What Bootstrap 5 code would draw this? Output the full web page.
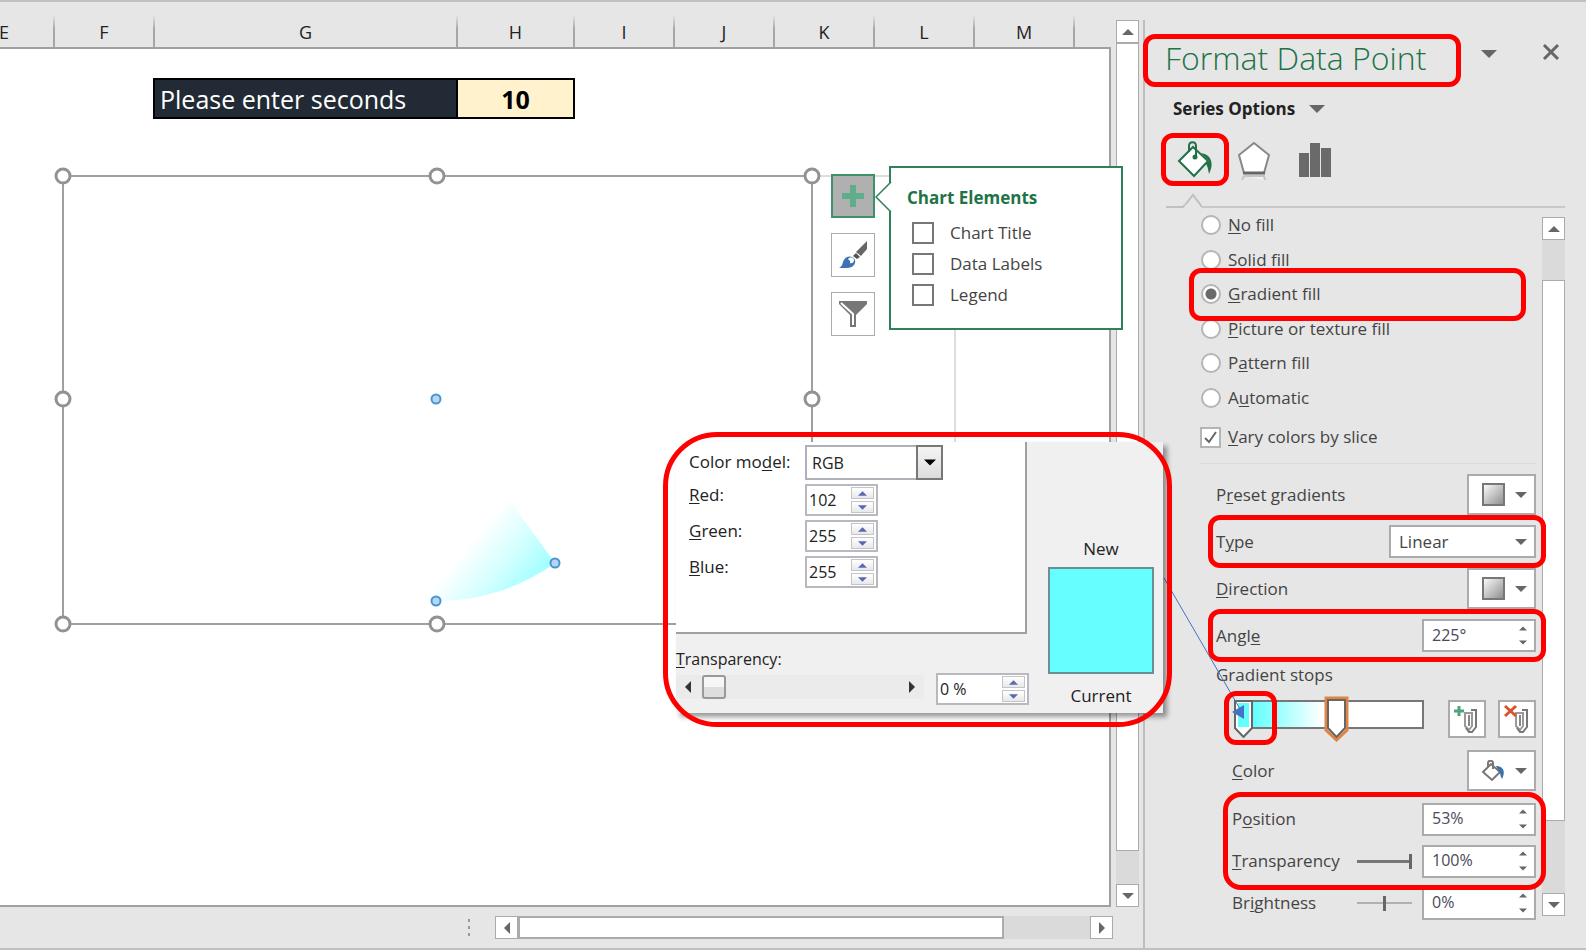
<!DOCTYPE html>
<html lang="en">
<head>
<meta charset="utf-8">
<meta name="viewport" content="width=device-width, initial-scale=1">
<title>Format Data Point</title>
<link href="https://cdn.jsdelivr.net/npm/bootstrap@5.3.0/dist/css/bootstrap.min.css" rel="stylesheet">
<style>
  :root { --chrome:#e6e6e6; --edge:#ababab; --ink:#444; --green:#217346; --callout:#fe0000; }
  body { font-family:"Open Sans","Noto Sans",sans-serif; font-size:17px; line-height:24px; color:var(--ink); background:var(--chrome); }
  button, input, select { font:inherit; color:inherit; border-radius:0; }
  button { padding:0; background:#fff; border:1px solid var(--edge); display:flex; align-items:center; justify-content:center; }
  .app { border-top:2px solid #c0c0c0; border-bottom:2px solid #c0c0c0; overflow:hidden; }
  u { text-underline-offset:2px; }

  /* worksheet */
  .workbook { min-width:0; }
  .col-heads { height:45px; margin-left:-45px; overflow:hidden; font-size:18px; color:#222; }
  .col-head { flex:0 0 100px; display:flex; align-items:end; justify-content:center; padding-bottom:3px; border-right:2px solid; border-image:linear-gradient(#e6e6e6 30%, #a6a6a6 60%) 1; }
  .col-g { flex-basis:303px; } .col-h { flex-basis:117px; }
  .canvas { background:#fff; border:2px solid #a0a0a0; border-left:0; overflow:hidden; }
  .entry { margin:29px 0 0 153px; height:41px; }
  .entry-label { width:305px; padding-left:5px; background:#222b35; color:#fff; border:2px solid #000; font-size:25px; line-height:38px; }
  .entry-value { width:117px; background:#fff2cc; color:#000; border:2px solid #000; border-left:0; text-align:center; font-weight:700; font-size:25px; }
  .chart-object { left:54px; top:164px; }
  .chart-object > svg { overflow:visible; }
  .side-tools { margin:8px 0 0 11px; gap:15px; }
  .side-tools button { width:44px; height:44px; }
  .side-tools .active-tool { background:#b0b0b0; border:2px solid #3d9268; }
  .elements-menu { width:234px; height:164px; margin-left:14px; padding:18px 0 0 16px; border:2px solid #2e8159; background:#fff; }
  .elements-menu h2 { font-size:17px; line-height:24px; font-weight:700; color:var(--green); margin:0 0 7px; }
  .elements-menu label { height:31px; gap:16px; margin-left:5px; }
  .elements-menu input { appearance:none; width:22px; height:22px; margin:0; border:2px solid #777; background:#fff; }
  .elements-menu .tip { left:-16px; top:14px; }

  /* scroll bars */
  .v-scroll { width:23px; }
  .v-scroll button { height:23px; color:#666; }
  .v-thumb { background:#fff; border:1px solid var(--edge); }
  .v-track, .h-track { background:#dadada; }
  .sheet-scroll { margin:18px 4px 0 5px; }
  .foot { height:41px; padding:9px 30px 9px 467px; }
  .foot button { width:23px; }
  .h-thumb { background:#fff; border:2px solid var(--edge); flex:487 1 0; }
  .h-track { flex:87 1 0; }

  /* format pane */
  .pane { flex:0 0 443px; margin-top:18px; border-left:2px solid #bdbdbd; padding-right:21px; }
  .ring { position:relative; }
  .ring::after { content:""; position:absolute; inset:-3px -10px -3px -8px; border:5px solid var(--callout); border-radius:12px; pointer-events:none; z-index:3; }
  .pane-title { margin-top:14px; height:53px; }
  .pane-title h1 { width:318px; margin:0 0 0 -2px; padding-left:22px; font-size:32px; line-height:48px; font-weight:300; color:var(--green); }
  .pane-title .ring::after, .tabs .ring::after { inset:0; }
  .pane-title button, .series-btn, .tabs button { background:none; border:0; }
  .series-btn { height:44px; margin-left:28px; gap:14px; font-weight:700; color:#222; }
  .tabs { margin:2px 0 0 16px; height:53px; }
  .tabs button { height:53px; }
  .tab-line { padding-left:21px; }
  .form-area { padding-left:55px; padding-right:6px; }
  .opts { height:207px; width:328px; }
  .opt { flex:1; gap:7px; }
  .opt input { appearance:none; width:20px; height:20px; margin:0 0 0 1px; border:2px solid #b5b5b5; border-radius:50%; background:#fff; }
  .opt input:checked { background:radial-gradient(#6a6a6a 0 5px, #fff 6px); }
  .opt.ring::after { inset:-9px 2px -9px -11px; }
  .vary { height:44px; gap:7px; }
  .vary input { appearance:none; width:21px; height:21px; margin:0; border:2px solid #b5b5b5; background:#fff url("data:image/svg+xml,%3Csvg xmlns='http://www.w3.org/2000/svg' viewBox='0 0 17 17'%3E%3Cpath d='M3 9l4 4 7-10' fill='none' stroke='%23666' stroke-width='2'/%3E%3C/svg%3E") center/17px no-repeat; }
  .rule { height:1px; margin:4px 0 7px; background:#dadada; }
  .field { height:47px; margin-left:16px; }
  .field-sm { height:42px; }
  .field-color { height:55px; }
  .pick { width:69px; height:41px; gap:10px; padding-left:5px; border-width:2px; }
  .type-select { appearance:none; width:147px; height:33px; padding:0 8px; border:2px solid var(--edge); background:#fff url("data:image/svg+xml,%3Csvg xmlns='http://www.w3.org/2000/svg' viewBox='0 0 12 6'%3E%3Cpath d='M0 0h12L6 6z' fill='%23666'/%3E%3C/svg%3E") right 7px center/12px 6px no-repeat; }
  .spin { width:114px; height:33px; border:2px solid var(--edge); background:#fff; }
  .spin input { min-width:0; width:100%; border:0; padding:0 0 2px 8px; background:none; font-size:16px; color:#4a4a58; }
  .spin div { width:24px; padding-right:3px; }
  .spin button { border:0; flex:1; background:none; color:#666; }
  .stop-row { height:52px; padding:9px 0 0 34px; }
  .stop-track { width:190px; height:29px; border:2px solid #777; background:linear-gradient(90deg,#66ffff 10%,#fff 46%); }
  .stop-first { left:-2px; top:-2px; }
  .stop-first.ring { position:absolute; }
  .stop-first.ring::after { inset:-9px -24px -7px -10px; }
  .stop-second { left:87px; top:-7px; }
  .stop-row button { width:38px; height:38px; border-width:2px; }
  .slide { appearance:none; width:55px; height:20px; margin:0 10px 0 0; background:linear-gradient(#777,#777) center/100% 3px no-repeat; }
  .slide::-webkit-slider-thumb { appearance:none; width:3px; height:15px; background:#666; }
  .slide.thin { background:linear-gradient(#b0b0b0,#b0b0b0) center/100% 2px no-repeat; }
  .pair.ring::after { inset:-6px -10px -8px -9px; border-radius:18px; }
  .stops-sub .field { margin-left:0; }
  .pane-scroll { margin:9px 0 8px; }
  .link-line { left:17px; top:556px; z-index:2; pointer-events:none; }

  /* colour dialog */
  .color-dialog { right:-20px; top:440px; width:487px; z-index:4; background:#f0f0f0; box-shadow:4px 4px 5px rgba(0,0,0,.4); display:grid; grid-template-columns:351px 1fr; font-size:16px; color:#222; }
  .color-dialog.ring { position:absolute; }
  .color-dialog.ring::after { inset:-10px -9px -14px -13px; border-radius:54px; }
  .rgb-panel { height:192px; padding:3px 0 0 13px; background:#fff; border-right:2px solid #a0a0a0; border-bottom:2px solid #a0a0a0; }
  .rgb-panel .line { height:36px; display:grid; grid-template-columns:116px auto; justify-content:start; }
  .rgb-panel .model { height:39px; }
  .rgb-panel label { font-size:17px; line-height:22px; }
  .model label { padding-top:6px; }
  .model select { appearance:none; width:138px; height:35px; padding:0 5px; border:2px solid #b0b0b8; background:#fff; }
  .drop-face { right:0; top:0; width:27px; height:35px; border:2px solid #777; background:linear-gradient(#f4f4f4,#dcdcdc); pointer-events:none; display:flex; align-items:center; justify-content:center; }
  .dlg-spin { width:73px; height:32px; border:2px solid #b8b8c0; background:#fff; color:#222; }
  .dlg-spin input { width:100%; min-width:0; border:0; padding:0 0 0 2px; background:none; }
  .dlg-spin div { flex:0 0 25px; gap:2px; padding:1px 2px 1px 0; }
  .dlg-spin button { flex:1; border:1px solid #c4c4c8; background:linear-gradient(#fff,#e8e8ea); }
  .alpha { height:79px; padding-top:13px; }
  .alpha-line { height:32px; margin-top:2px; }
  .alpha-line > .bar { width:248px; height:24px; background:#ebebeb; }
  .bar button { width:24px; background:none; border:0; }
  .bar input { appearance:none; flex:1; min-width:0; height:24px; margin:0 0 0 2px; background:none; }
  .bar input::-webkit-slider-thumb { appearance:none; width:24px; height:24px; border:2px solid #999; border-radius:3px; background:linear-gradient(#f6f6f6 50%,#dedede 50%); }
  .alpha .dlg-spin { width:93px; margin-right:-2px; }
  .preview { grid-column:2; grid-row:1 / span 2; padding:0 0 5px 12px; font-size:17px; }
  .swatch { width:106px; height:107px; margin:6px 0 10px; background:#66ffff; border:2px solid #6b8f92; }
</style>
</head>
<body>
<svg width="0" height="0" class="position-absolute" aria-hidden="true">
  <defs>
    <symbol id="down" viewBox="0 0 12 6"><path d="M0 0h12L6 6z" fill="currentColor"/></symbol>
    <symbol id="up" viewBox="0 0 12 6"><path d="M0 6h12L6 0z" fill="currentColor"/></symbol>
    <linearGradient id="metal" x1="0" y1="0" x2="1" y2="1"><stop stop-color="#fff"/><stop offset="1" stop-color="#8a8a8a"/></linearGradient>
    <linearGradient id="slice" gradientUnits="userSpaceOnUse" x1="501" y1="397" x2="441" y2="347"><stop stop-color="#66ffff" stop-opacity=".64"/><stop offset=".5" stop-color="#66ffff" stop-opacity=".28"/><stop offset="1" stop-color="#66ffff" stop-opacity="0"/></linearGradient>
  </defs>
</svg>

<div class="app d-flex min-vh-100">
  <main class="workbook flex-grow-1 position-relative d-flex flex-column">
    <div class="d-flex flex-grow-1">
      <div class="flex-grow-1 d-flex flex-column overflow-hidden">
        <div class="col-heads d-flex">
          <div class="col-head">E</div><div class="col-head">F</div><div class="col-head col-g">G</div><div class="col-head col-h">H</div><div class="col-head">I</div><div class="col-head">J</div><div class="col-head">K</div><div class="col-head">L</div><div class="col-head">M</div>
        </div>
        <div class="canvas flex-grow-1 position-relative">
          <div class="entry d-flex">
            <label class="entry-label" for="seconds">Please enter seconds</label>
            <input class="entry-value" id="seconds" value="10">
          </div>
        </div>
      </div>
      <div class="v-scroll sheet-scroll d-flex flex-column">
        <button aria-label="Scroll up"><svg width="12" height="6"><use href="#up"/></svg></button>
        <div class="v-thumb flex-grow-1"></div>
        <div class="v-track" style="height:33px"></div>
        <button aria-label="Scroll down"><svg width="12" height="6"><use href="#down"/></svg></button>
      </div>
    </div>
    <div class="foot d-flex">
      <svg width="4" height="23" class="me-4" fill="#999"><path d="M1 3h2v3h-2zM1 10h2v3h-2zM1 17h2v3h-2z"/></svg>
      <button aria-label="Scroll left"><svg width="6" height="12"><path d="M6 0v12L0 6z" fill="#666"/></svg></button>
      <div class="h-thumb"></div><div class="h-track"></div>
      <button aria-label="Scroll right"><svg width="6" height="12"><path d="M0 0v12l6-6z" fill="#666"/></svg></button>
    </div>

    <div class="chart-object position-absolute d-flex align-items-start">
      <svg width="766" height="466" role="img" aria-label="Chart">
        <path d="M757 10H835M901 160V290" stroke="#ddd" stroke-width="2"/>
        <path d="M382 233L501 397A202 202 0 0 1 382 435Z" fill="url(#slice)"/>
        <rect x="9" y="10" width="749" height="448" fill="none" stroke="#a0a0a0" stroke-width="2"/>
        <g fill="#fff" stroke="#929292" stroke-width="3"><circle cx="9" cy="10" r="7"/><circle cx="383" cy="10" r="7"/><circle cx="758" cy="10" r="7"/><circle cx="9" cy="233" r="7"/><circle cx="758" cy="233" r="7"/><circle cx="9" cy="458" r="7"/><circle cx="383" cy="458" r="7"/></g>
        <g fill="#b5d7f3" stroke="#4a94d4" stroke-width="2"><circle cx="382" cy="233" r="4.500"/><circle cx="501" cy="397" r="4.500"/><circle cx="382" cy="435" r="4.500"/></g>
      </svg>
      <div class="side-tools d-flex flex-column">
        <button class="active-tool" aria-label="Chart Elements"><svg width="24" height="24"><path d="M9 1h6v8h8v6h-8v8H9v-8H1V9h8z" fill="#5fae8b"/></svg></button>
        <button aria-label="Chart Styles"><svg width="30" height="30"><path d="M29 1v8l-6 7-5-4z" fill="#666"/><path d="M18 13l4 4-3 2-4-3z" fill="#555"/><path d="M1 28c4-2 3-5 5-8 3-5 9-4 11 0 1 4-2 8-8 8z" fill="#3b73b5"/><path d="M10 19c3-3 6-1 6 1 0 2-2 4-4 3 1-2-1-3-2-4z" fill="#fff"/></svg></button>
        <button aria-label="Chart Filters"><svg width="30" height="28"><path d="M1 1h28v3L18 15v12h-6V15L1 4z" fill="#777"/><path d="M3 3l12 11v11" stroke="#fff" stroke-width="2" fill="none"/></svg></button>
      </div>
      <section class="elements-menu position-relative">
        <svg class="tip position-absolute" width="17" height="30"><path d="M16 0L1 15l15 15" fill="#fff" stroke="#2e8159" stroke-width="1.500"/></svg>
        <h2>Chart Elements</h2>
        <label class="d-flex align-items-center"><input type="checkbox">Chart Title</label>
        <label class="d-flex align-items-center"><input type="checkbox">Data Labels</label>
        <label class="d-flex align-items-center"><input type="checkbox">Legend</label>
      </section>
    </div>

    <section class="color-dialog ring">
      <div class="rgb-panel">
        <div class="line model"><label for="model">Color mo<u>d</u>el:</label>
          <div class="position-relative"><select id="model"><option>RGB</option></select><span class="drop-face position-absolute"><svg width="12" height="7" color="#000"><use href="#down"/></svg></span></div></div>
        <div class="line"><label for="red"><u>R</u>ed:</label>
          <div class="dlg-spin d-flex"><input id="red" value="102"><div class="d-flex flex-column"><button aria-label="More red"><svg width="9" height="5" color="#5a68b0"><use href="#up"/></svg></button><button aria-label="Less red"><svg width="9" height="5" color="#5a68b0"><use href="#down"/></svg></button></div></div></div>
        <div class="line"><label for="grn"><u>G</u>reen:</label>
          <div class="dlg-spin d-flex"><input id="grn" value="255"><div class="d-flex flex-column"><button aria-label="More green"><svg width="9" height="5" color="#5a68b0"><use href="#up"/></svg></button><button aria-label="Less green"><svg width="9" height="5" color="#5a68b0"><use href="#down"/></svg></button></div></div></div>
        <div class="line"><label for="blu"><u>B</u>lue:</label>
          <div class="dlg-spin d-flex"><input id="blu" value="255"><div class="d-flex flex-column"><button aria-label="More blue"><svg width="9" height="5" color="#5a68b0"><use href="#up"/></svg></button><button aria-label="Less blue"><svg width="9" height="5" color="#5a68b0"><use href="#down"/></svg></button></div></div></div>
      </div>
      <div class="alpha">
        <label for="alpha" class="d-block"><u>T</u>ransparency:</label>
        <div class="alpha-line d-flex justify-content-between align-items-center">
          <div class="bar d-flex mb-1"><button aria-label="Lower"><svg width="6" height="12"><path d="M6 0v12L0 6z" fill="#333"/></svg></button><input type="range" value="0" aria-label="Transparency"><button aria-label="Higher"><svg width="6" height="12"><path d="M0 0v12l6-6z" fill="#333"/></svg></button></div>
          <div class="dlg-spin d-flex"><input id="alpha" value="0 %"><div class="d-flex flex-column"><button aria-label="Increase"><svg width="9" height="5" color="#5a68b0"><use href="#up"/></svg></button><button aria-label="Decrease"><svg width="9" height="5" color="#5a68b0"><use href="#down"/></svg></button></div></div>
        </div>
      </div>
      <div class="preview d-flex flex-column align-items-center justify-content-end"><span>New</span><div class="swatch"></div><span>Current</span></div>
    </section>
  </main>

  <aside class="pane position-relative">
    <header class="pane-title d-flex align-items-start">
      <h1 class="ring h-100">Format Data Point</h1>
      <button class="ms-3 mt-3" aria-label="Pane options"><svg width="16" height="8" color="#666" class="ms-1"><use href="#down"/></svg></button>
      <button class="ms-auto me-1 mt-2" aria-label="Close"><svg width="20" height="20"><path d="M3 3l14 14M17 3L3 17" stroke="#666" stroke-width="3"/></svg></button>
    </header>
    <button class="series-btn">Series Options <svg width="16" height="8" color="#666"><use href="#down"/></svg></button>
    <div class="tabs d-flex">
      <button class="ring px-3" aria-label="Fill and line"><svg width="36" height="38"><path d="M2 20L16 6l15 14-14 15z" fill="#fff" stroke="#217346" stroke-width="2"/><path d="M12 11V5c0-5 7-5 7 0v10" fill="none" stroke="#217346" stroke-width="2"/><circle cx="18" cy="16" r="2.500" fill="#217346"/><path d="M24 12c9 1 14 9 8 21-1-5-1-7-3-10l3-3z" fill="#217346"/></svg></button>
      <button class="ms-1 ps-1" aria-label="Effects"><svg width="34" height="40"><path d="M17 3l15 12-5 18H7L2 15z" fill="#fff" stroke="#888" stroke-width="2"/><path d="M6 33h22" stroke="#666" stroke-width="3"/><path d="M7 36h20l1 4M7 36l-2 4" stroke="#c4c4c4" stroke-width="2" fill="#f2f2f2"/></svg></button>
      <button class="ms-4 ps-1" aria-label="Series options"><svg width="33" height="35"><path d="M0 11h10v24H0zM11 1h10v34H11zM22 6h10v29H22z" fill="#6a6a6a"/></svg></button>
    </div>
    <div class="tab-line d-flex">
      <svg width="19" height="22"><path d="M0 21H17L19 19" stroke="#c0c0c0" stroke-width="2" fill="none"/></svg><svg width="17" height="22"><path d="M0 19L8 9l9 12" stroke="#c0c0c0" stroke-width="2" fill="none"/></svg><span class="flex-grow-1 align-self-end" style="height:2px;background:#c8c8c8"></span>
    </div>
    <div class="d-flex">
      <form class="form-area flex-grow-1">
        <div class="opts d-flex flex-column">
          <label class="opt d-flex align-items-center"><input type="radio" name="fill"><span><u>N</u>o fill</span></label>
          <label class="opt d-flex align-items-center"><input type="radio" name="fill"><span><u>S</u>olid fill</span></label>
          <label class="opt ring d-flex align-items-center"><input type="radio" name="fill" checked><span><u>G</u>radient fill</span></label>
          <label class="opt d-flex align-items-center"><input type="radio" name="fill"><span><u>P</u>icture or texture fill</span></label>
          <label class="opt d-flex align-items-center"><input type="radio" name="fill"><span>P<u>a</u>ttern fill</span></label>
          <label class="opt d-flex align-items-center"><input type="radio" name="fill"><span>A<u>u</u>tomatic</span></label>
        </div>
        <label class="vary d-flex align-items-center"><input type="checkbox" checked><span><u>V</u>ary colors by slice</span></label>
        <div class="rule"></div>
        <div class="field d-flex align-items-center justify-content-between"><label for="preset">P<u>r</u>eset gradients</label><button type="button" class="pick" id="preset"><svg width="23" height="23"><rect x="1" y="1" width="21" height="21" fill="url(#metal)" stroke="#777" stroke-width="2"/></svg><svg width="12" height="6" color="#666"><use href="#down"/></svg></button></div>
        <div class="field ring d-flex align-items-center justify-content-between"><label for="type">T<u>y</u>pe</label><select class="type-select" id="type"><option>Linear</option></select></div>
        <div class="field d-flex align-items-center justify-content-between"><label for="dir"><u>D</u>irection</label><button type="button" class="pick" id="dir"><svg width="23" height="23"><rect x="1" y="1" width="21" height="21" fill="url(#metal)" stroke="#777" stroke-width="2"/></svg><svg width="12" height="6" color="#666"><use href="#down"/></svg></button></div>
        <div class="field ring d-flex align-items-center justify-content-between"><label for="angle">Angl<u>e</u></label><div class="spin d-flex"><input id="angle" value="225°"><div class="d-flex flex-column"><button type="button" aria-label="Increase"><svg width="8" height="5"><use href="#up"/></svg></button><button type="button" aria-label="Decrease"><svg width="8" height="5"><use href="#down"/></svg></button></div></div></div>
        <div class="ms-3 py-1">Gradient stops</div>
        <div class="stop-row d-flex align-items-start">
          <div class="stop-track position-relative">
            <div class="stop-first ring"><svg width="19" height="38" class="d-block"><path d="M1 1h17v27l-8.500 9L1 28z" fill="#fff" stroke="#666" stroke-width="2"/><path d="M4 3h11v24H4z" fill="#66ffff"/></svg></div>
            <svg class="stop-second position-absolute" width="27" height="47"><path d="M3 3h21v32L13.500 45 3 35z" fill="#fff" stroke="#e08344" stroke-width="3"/><path d="M5 5h17v28l-8.500 9L5 33z" fill="#fff" stroke="#666" stroke-width="2"/></svg>
          </div>
          <button type="button" class="ms-4" aria-label="Add gradient stop"><svg width="28" height="30"><path d="M12 9h7v13l-3 4-4-4z" fill="#fff" stroke="#999" stroke-width="2"/><path d="M18 6h5v17l-4 5h-3l-3-4" fill="none" stroke="#777" stroke-width="2"/><path d="M16 11v11" stroke="#888" stroke-width="2"/><path d="M6 2v10M1 7h10" stroke="#4fa37f" stroke-width="3"/></svg></button>
          <button type="button" class="ms-auto" aria-label="Remove gradient stop"><svg width="28" height="30"><path d="M13 9h7v13l-3 4-4-4z" fill="#fff" stroke="#999" stroke-width="2"/><path d="M19 6h5v17l-4 5h-3l-3-4" fill="none" stroke="#777" stroke-width="2"/><path d="M17 11v11" stroke="#888" stroke-width="2"/><path d="M2 2l11 10M13 2L2 12" stroke="#d8532c" stroke-width="3"/></svg></button>
        </div>
        <div class="stops-sub ms-4 ps-2">
          <div class="field field-color d-flex align-items-center justify-content-between"><label for="color"><u>C</u>olor</label><button type="button" class="pick" id="color"><svg width="24" height="22"><path d="M2 12l8-8 9 8-8 8z" fill="#fff" stroke="#777" stroke-width="2"/><path d="M7 7V3c0-3 5-3 5 0v6" fill="none" stroke="#777" stroke-width="2"/><path d="M15 6c7 0 10 5 6 13-2-3-1-5-3-7z" fill="#3b73a8"/></svg><svg width="12" height="6" color="#666"><use href="#down"/></svg></button></div>
          <div class="pair ring">
            <div class="field field-sm d-flex align-items-center justify-content-between"><label for="pos">P<u>o</u>sition</label><div class="spin d-flex"><input id="pos" value="53%"><div class="d-flex flex-column"><button type="button" aria-label="Increase"><svg width="8" height="5"><use href="#up"/></svg></button><button type="button" aria-label="Decrease"><svg width="8" height="5"><use href="#down"/></svg></button></div></div></div>
            <div class="field field-sm d-flex align-items-center"><label for="trans" class="me-auto"><u>T</u>ransparency</label><input class="slide" type="range" value="100" aria-label="Transparency"><div class="spin d-flex"><input id="trans" value="100%"><div class="d-flex flex-column"><button type="button" aria-label="Increase"><svg width="8" height="5"><use href="#up"/></svg></button><button type="button" aria-label="Decrease"><svg width="8" height="5"><use href="#down"/></svg></button></div></div></div>
          </div>
          <div class="field field-sm d-flex align-items-center"><label for="brt" class="me-auto">Br<u>i</u>ghtness</label><input class="slide thin" type="range" value="50" aria-label="Brightness"><div class="spin d-flex"><input id="brt" value="0%"><div class="d-flex flex-column"><button type="button" aria-label="Increase"><svg width="8" height="5"><use href="#up"/></svg></button><button type="button" aria-label="Decrease"><svg width="8" height="5"><use href="#down"/></svg></button></div></div></div>
        </div>
      </form>
      <div class="v-scroll pane-scroll d-flex flex-column">
        <button aria-label="Scroll up"><svg width="12" height="6"><use href="#up"/></svg></button>
        <div class="v-track" style="height:40px"></div>
        <div class="v-thumb flex-grow-1"></div>
        <div class="v-track" style="height:72px"></div>
        <button aria-label="Scroll down"><svg width="12" height="6"><use href="#down"/></svg></button>
      </div>
    </div>
    <svg class="link-line position-absolute" width="90" height="145"><path d="M2 2L78 133" stroke="#4472c4" stroke-width="1"/><path d="M70 136l12-7v14z" fill="#4472c4"/></svg>
  </aside>
</div>
<script src="https://cdn.jsdelivr.net/npm/bootstrap@5.3.0/dist/js/bootstrap.bundle.min.js"></script>
</body>
</html>
